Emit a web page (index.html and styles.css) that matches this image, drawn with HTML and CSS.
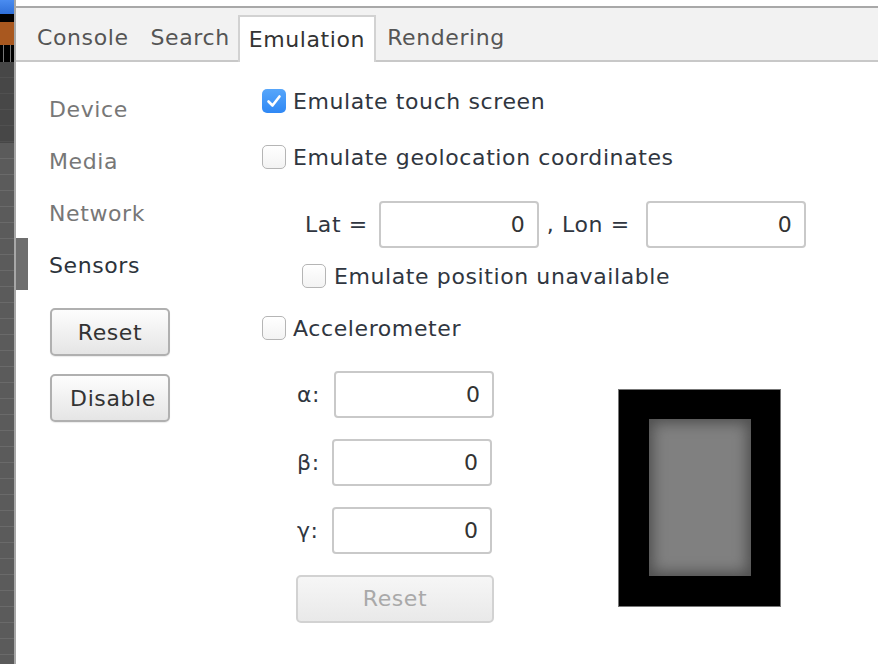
FILE: index.html
```html
<!DOCTYPE html>
<html>
<head>
<meta charset="utf-8">
<link rel="stylesheet" href="styles.css">
</head>
<body>
<div class="strip">
  <div class="s-blue"></div>
  <div class="s-black"></div>
  <div class="s-orange"></div>
  <div class="s-ticks"></div>
  <div class="s-dark"></div>
  <div class="s-rows"></div>
</div>
<div class="panel">
  <div class="topgap"></div>
  <div class="tabbar">
    <div class="tab">Console</div>
    <div class="tab">Search</div>
    <div class="tab active">Emulation</div>
    <div class="tab">Rendering</div>
  </div>
  <div class="content">
    <div class="sidebar">
      <div class="navitem">Device</div>
      <div class="navitem">Media</div>
      <div class="navitem">Network</div>
      <div class="navitem selected">Sensors</div>
      <button class="btn side-btn first">Reset</button>
      <button class="btn side-btn disable">Disable</button>
    </div>
    <div class="main">
      <div class="row r-touch">
        <span class="cb checked"><svg viewBox="0 0 24 24" width="24" height="24"><path d="M6.5 12.5 L10.5 16.5 L17.5 7.5" fill="none" stroke="#fff" stroke-width="2.6" stroke-linecap="round" stroke-linejoin="round"/></svg></span>
        <span class="label">Emulate touch screen</span>
      </div>
      <div class="row r-geo">
        <span class="cb"></span>
        <span class="label">Emulate geolocation coordinates</span>
      </div>
      <div class="row r-lat">
        <span class="label">Lat =</span>
        <input class="field" value="0">
        <span class="label lon">, Lon =</span>
        <input class="field" value="0">
      </div>
      <div class="row r-pos">
        <span class="cb"></span>
        <span class="label">Emulate position unavailable</span>
      </div>
      <div class="row r-acc">
        <span class="cb"></span>
        <span class="label">Accelerometer</span>
      </div>
      <div class="accel">
        <div class="fields">
          <div class="frow"><span class="label greek">α:</span><input class="field" value="0"></div>
          <div class="frow"><span class="label greek">β:</span><input class="field" value="0"></div>
          <div class="frow"><span class="label greek">γ:</span><input class="field" value="0"></div>
          <button class="btn disabled-btn">Reset</button>
        </div>
        <div class="device">
          <div class="screen"></div>
        </div>
      </div>
    </div>
  </div>
</div>
</body>
</html>
```

FILE: styles.css
```css
html, body {
  margin: 0;
  padding: 0;
  height: 664px;
  overflow: hidden;
  background: #fff;
}
body {
  display: flex;
  font-family: "DejaVu Sans", sans-serif;
  font-size: 22px;
  letter-spacing: 0.6px;
  color: #303640;
}
.strip {
  width: 14px;
  border-right: 2px solid #a7a7a7;
  height: 664px;
  display: flex;
  flex-direction: column;
  flex-shrink: 0;
}
.s-blue { height: 14px; background: linear-gradient(#4a8cf0, #2f6fd8); }
.s-black { height: 8px; background: #000; }
.s-orange { height: 23px; background: #a9581f; }
.s-ticks {
  height: 17px;
  background: #000;
  background-image: linear-gradient(90deg, transparent 3px, #777 3px, #777 4px, transparent 4px, transparent 10px, #777 10px, #777 11px, transparent 11px);
}
.s-dark {
  height: 81px;
  background: repeating-linear-gradient(#474747 0, #474747 15px, #505050 15px, #505050 16px);
}
.s-rows {
  flex: 1;
  background: repeating-linear-gradient(#5b5b5b 0, #5b5b5b 15px, #6a6a6a 15px, #6a6a6a 16px);
}
.panel {
  flex: 1;
  display: flex;
  flex-direction: column;
}
.topgap {
  height: 6px;
  border-bottom: 2px solid #a8a8a8;
}
.tabbar {
  height: 52px;
  background: #f2f2f2;
  border-bottom: 2px solid #c8c8c8;
  display: flex;
  align-items: flex-end;
  padding-left: 10px;
}
.tab {
  height: 47px;
  margin-bottom: -2px;
  padding: 0 11px 2px 11px;
  display: flex;
  align-items: center;
  color: #555;
  box-sizing: border-box;
}
.tab.active {
  background: #fff;
  color: #333;
  border: 2px solid #d2d2d2;
  border-bottom: none;
  padding: 0 9px 0 9px;
  margin-left: -3px;
}
.content {
  display: flex;
  flex: 1;
}
.sidebar {
  width: 246px;
  padding-top: 20px;
  display: flex;
  flex-direction: column;
  align-items: flex-start;
}
.navitem {
  height: 52px;
  padding-top: 4px;
  line-height: 48px;
  padding-left: 33px;
  color: #777;
  box-sizing: border-box;
}
.navitem.selected {
  color: #2c333b;
  border-left: 12px solid #6e6e6e;
  padding-left: 21px;
}
.btn {
  font-family: "DejaVu Sans", sans-serif;
  font-size: 22px;
  letter-spacing: 0.6px;
  border-radius: 5px;
  box-sizing: border-box;
  padding: 0;
}
.side-btn {
  width: 120px;
  height: 48px;
  margin-left: 34px;
  margin-top: 18px;
  color: #333;
  background: linear-gradient(#fdfdfd, #e5e5e5);
  border: 2px solid #b0b0b0;
  box-shadow: 0 1px 1px rgba(0,0,0,0.08);
}
.side-btn.disable { padding-left: 6px; }
.main {
  display: flex;
  flex-direction: column;
}
.row {
  display: flex;
  align-items: center;
}
.label {
  white-space: nowrap;
}
.cb {
  width: 24px;
  height: 24px;
  box-sizing: border-box;
  border-radius: 5px;
  border: 1.5px solid #b5b5b5;
  background: linear-gradient(#fff, #f3f3f3);
  margin-right: 7px;
  display: inline-block;
  flex-shrink: 0;
}
.cb.checked {
  border: none;
  background: linear-gradient(#57a6fa, #2f88f5);
}
.cb svg { display: block; }
.r-touch { height: 24px; margin-top: 27px; }
.r-geo { height: 24px; margin-top: 32px; }
.r-lat { height: 46px; margin-top: 32px; padding-left: 43px; }
.r-lat .label { margin-right: 11px; }
.r-lat .lon { margin-left: 8px; margin-right: 16px; }
.r-pos { height: 24px; margin-top: 17px; padding-left: 40px; }
.r-pos .cb { margin-right: 8px; }
.r-acc { height: 24px; margin-top: 28px; }
.field {
  width: 160px;
  height: 47px;
  box-sizing: border-box;
  border: 2px solid #c9c9c9;
  border-radius: 4px;
  font-family: "DejaVu Sans", sans-serif;
  font-size: 22px;
  color: #333;
  text-align: right;
  padding: 0 12px 0 0;
  background: #fff;
  outline: none;
}
.accel {
  display: flex;
  align-items: flex-start;
  margin-top: 31px;
  padding-left: 34px;
}
.fields {
  display: flex;
  flex-direction: column;
  width: 198px;
}
.frow {
  display: flex;
  align-items: center;
  justify-content: space-between;
  margin-bottom: 21px;
}
.frow:nth-child(2), .frow:nth-child(3) { padding-right: 2px; }
.greek { padding-left: 1px; }
.disabled-btn {
  width: 198px;
  height: 48px;
  color: #a9a9a9;
  background: linear-gradient(#f6f6f6, #e9e9e9);
  border: 2px solid #d2d2d2;
  padding-bottom: 2px;
}
.device {
  margin-left: 124px;
  margin-top: 18px;
  width: 163px;
  height: 218px;
  box-sizing: border-box;
  background: #000;
  border: 1px solid #777;
  padding: 29px 29px 30px 30px;
}
.screen {
  width: 102px;
  height: 157px;
  background: #808080;
  box-shadow: inset 0 0 14px 4px #4e4e4e;
}
```
